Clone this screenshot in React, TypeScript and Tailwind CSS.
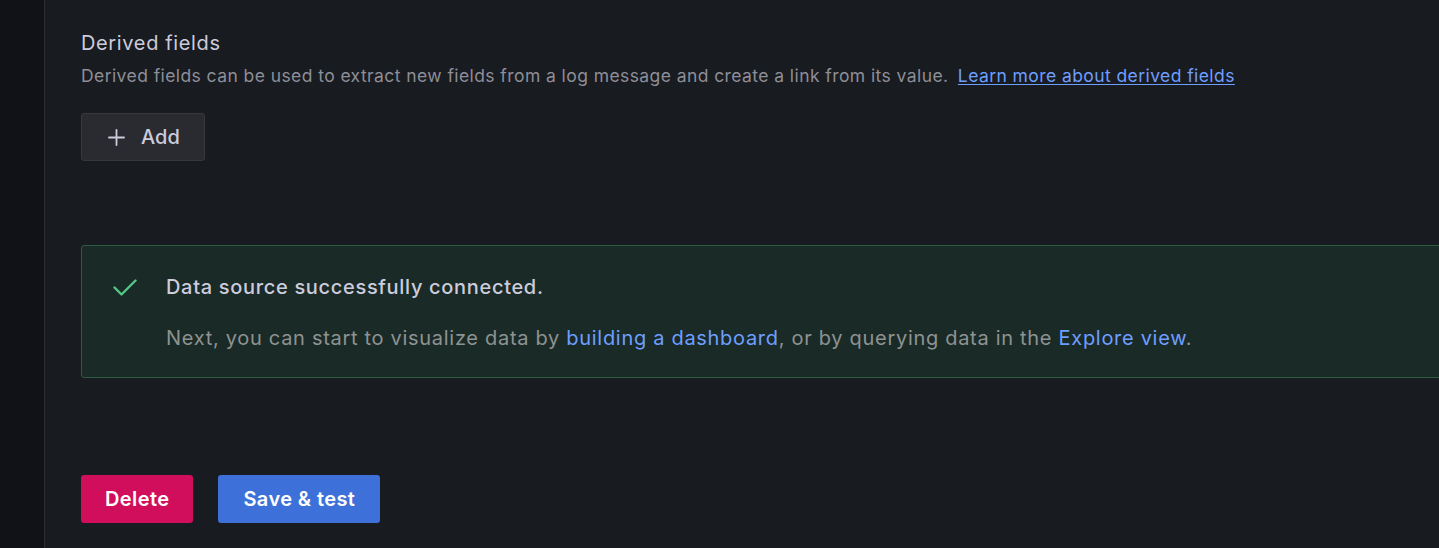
function CheckIcon() {
  return (
    <svg width="24" height="18" viewBox="0 0 24 18" fill="none" className="shrink-0">
      <polyline points="1.5,8.5 8.5,15.5 22.5,1.5" stroke="#55c783" strokeWidth="2.4" strokeLinecap="round" strokeLinejoin="round" />
    </svg>
  );
}

function PlusIcon() {
  return (
    <svg width="17" height="17" viewBox="0 0 17 17" fill="none" className="shrink-0">
      <path d="M8.5 1v15M1 8.5h15" stroke="currentColor" strokeWidth="1.8" strokeLinecap="round" />
    </svg>
  );
}

export default function App() {
  return (
    <div className="flex h-[548px] w-full overflow-hidden bg-[#181b1f] font-['Inter',sans-serif]">
      {/* Side rail */}
      <div className="w-[45px] shrink-0 border-r border-[#2a2c32] bg-[#111217]" />

      {/* Main content */}
      <div className="flex-1 min-w-0 pl-[36px] pt-[28px]">
        <h6 className="text-[20px] leading-[30px] font-normal tracking-[0.032em] text-[#ccccdc]">Derived fields</h6>
        <p className="mt-[5px] text-[17.5px] leading-[26px] tracking-[0.024em] text-[#8e8e98] whitespace-nowrap">
          Derived fields can be used to extract new fields from a log message and create a link from its value.{' '}
          <a href="#" className="ml-[4px] text-[#6e9fff] underline underline-offset-[2px]">
            Learn more about derived fields
          </a>
        </p>

        <button className="mt-[24px] flex h-[48px] items-center gap-[16px] rounded-[3px] border border-[#36383e] bg-[#2a2b30] pl-[26px] pr-[24px] text-[20px] font-medium text-[#ccccdc]">
          <PlusIcon />
          Add
        </button>

        {/* Success alert */}
        <div className="mt-[84px] w-[1420px] rounded-[3px] border border-[#2e5a40] bg-[#1a2a27] pl-[31px] pt-[26px] pb-[24px]">
          <div className="flex gap-[29px]">
            <div className="pt-[7px]">
              <CheckIcon />
            </div>
            <div>
              <div className="text-[20px] leading-[30px] font-medium tracking-[0.034em] text-[#ccccdc]">
                Data source successfully connected.
              </div>
              <div className="mt-[21px] text-[20px] leading-[30px] tracking-[0.035em] text-[#8e9391] whitespace-nowrap">
                Next, you can start to visualize data by{' '}
                <a href="#" className="text-[#6e9fff]">building a dashboard</a>, or by querying data in the{' '}
                <a href="#" className="text-[#6e9fff]">Explore view</a>.
              </div>
            </div>
          </div>
        </div>

        {/* Actions */}
        <div className="mt-[97px] flex gap-[25px]">
          <button className="h-[48px] rounded-[3px] bg-[#d10e5c] px-[24px] text-[20px] font-semibold tracking-[0.02em] text-white">
            Delete
          </button>
          <button className="h-[48px] rounded-[3px] bg-[#3d71d9] px-[25px] text-[20px] font-semibold tracking-[0.02em] text-white">
            Save &amp; test
          </button>
        </div>
      </div>
    </div>
  );
}
